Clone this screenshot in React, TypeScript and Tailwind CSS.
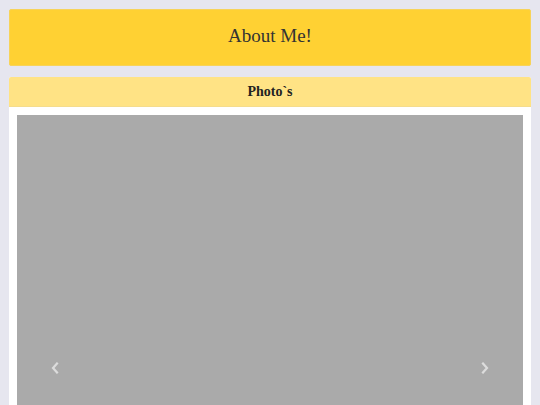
import React from "react";

function Chevron({ dir }: { dir: "left" | "right" }) {
  return (
    <svg width="8" height="12" viewBox="0 0 8 12" className="block">
      <path
        d={dir === "left" ? "M6 1.5 L2 6 L6 10.5" : "M2 1.5 L6 6 L2 10.5"}
        fill="none"
        stroke="#dcdcdc"
        strokeWidth="2.2"
        strokeLinecap="square"
      />
    </svg>
  );
}

export default function App() {
  return (
    <div className="min-h-screen bg-[#e6e6ef] p-[9px] flex flex-col gap-[11px] font-['Liberation_Serif',serif]">
      <header className="h-[57px] bg-[#ffd133] border border-[#f7d35a] rounded-[2px] flex items-center justify-center pb-[4px]">
        <h1 className="text-[19px] text-[#333] leading-none font-['Liberation_Serif',serif]">About Me!</h1>
      </header>
      <section className="bg-white rounded-[2px] overflow-hidden">
        <div className="h-[30px] bg-[#ffe385] border-b border-[#f5dc8c] flex items-center justify-center">
          <h2 className="text-[14px] font-bold text-[#222] leading-none font-['Liberation_Serif',serif]">Photo`s</h2>
        </div>
        <div className="p-2">
          <div className="relative h-[400px] bg-[#aaaaaa]">
            <span className="absolute left-[34px] top-[247px]">
              <Chevron dir="left" />
            </span>
            <span className="absolute right-[34px] top-[247px]">
              <Chevron dir="right" />
            </span>
          </div>
        </div>
      </section>
    </div>
  );
}
